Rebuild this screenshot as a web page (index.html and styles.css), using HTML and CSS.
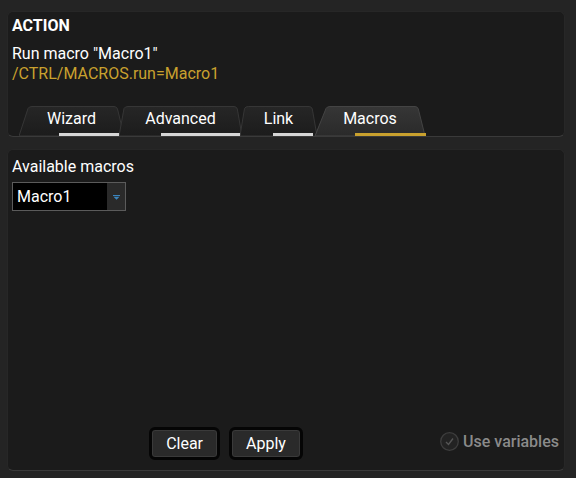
FILE: index.html
```html
<!DOCTYPE html>
<html>
<head>
<meta charset="utf-8">
<link rel="stylesheet" href="styles.css">
</head>
<body>
<div class="page">
  <section class="panel panel-action">
    <div class="title">ACTION</div>
    <div class="desc">Run macro "Macro1"</div>
    <div class="path">/CTRL/MACROS.run=Macro1</div>
    <nav class="tabs">
      <div class="tab tab-wizard">
        <svg class="tab-bg" width="105" height="30" viewBox="0 0 105 30"><defs><linearGradient id="gi" x1="0" y1="0" x2="0" y2="1"><stop offset="0" stop-color="#262626"/><stop offset="1" stop-color="#1c1c1c"/></linearGradient><linearGradient id="ga" x1="0" y1="0" x2="0" y2="1"><stop offset="0" stop-color="#363636"/><stop offset="1" stop-color="#2a2a2a"/></linearGradient></defs><path d="M0 30 L9 2.5 Q10 0.5 13 0.5 L95 0.5 Q97.5 0.5 98.5 3 L105 30 Z" fill="url(#gi)" stroke="#363636" stroke-width="1"/></svg>
        <span class="tab-label">Wizard</span><span class="tab-line"></span>
      </div>
      <div class="tab tab-advanced">
        <svg class="tab-bg" width="123" height="30" viewBox="0 0 123 30"><path d="M0 30 L5 2.5 Q6 0.5 9 0.5 L115 0.5 Q117.5 0.5 118.3 3 L123 30 Z" fill="url(#gi)" stroke="#363636" stroke-width="1"/></svg>
        <span class="tab-label">Advanced</span><span class="tab-line"></span>
      </div>
      <div class="tab tab-link">
        <svg class="tab-bg" width="77" height="30" viewBox="0 0 77 30"><path d="M0 30 L4.5 2.5 Q5.5 0.5 8.5 0.5 L69 0.5 Q71.5 0.5 72.3 3 L77 30 Z" fill="url(#gi)" stroke="#363636" stroke-width="1"/></svg>
        <span class="tab-label">Link</span><span class="tab-line"></span>
      </div>
      <div class="tab tab-macros active">
        <svg class="tab-bg" width="110" height="30" viewBox="0 0 110 30"><path d="M0 30 L11 2.5 Q12 0.5 15 0.5 L100 0.5 Q102.5 0.5 103.3 3 L110 30 Z" fill="url(#ga)" stroke="#444" stroke-width="1"/></svg>
        <span class="tab-label">Macros</span><span class="tab-line"></span>
      </div>
    </nav>
  </section>

  <section class="panel panel-macros">
    <div class="field-label">Available macros</div>
    <div class="select">
      <span class="select-value">Macro1</span>
      <span class="select-arrow"><svg width="7" height="5" viewBox="0 0 7 5"><rect x="0" y="0" width="7" height="1" fill="#3a84bd"/><path d="M0.5 1.8 L6.5 1.8 L3.5 4.8 Z" fill="#3a84bd"/></svg></span>
    </div>
    <div class="footer">
      <div class="buttons">
        <button class="btn">Clear</button>
        <button class="btn">Apply</button>
      </div>
      <label class="usevars">
        <span class="check"><svg width="19" height="19" viewBox="0 0 19 19"><circle cx="9.5" cy="9.5" r="8.8" fill="#232323" stroke="#3e3e3e" stroke-width="1.3"/><path d="M6 10 L8.5 12.5 L13 6.5" fill="none" stroke="#555" stroke-width="1.4"/></svg></span>
        <span class="usevars-text">Use variables</span>
      </label>
    </div>
  </section>
</div>
</body>
</html>
```

FILE: styles.css
```css
html, body {
  margin: 0;
  padding: 0;
  background: #242424;
  font-family: Roboto, "Liberation Sans", sans-serif;
  color: #fff;
}

.page {
  width: 576px;
  height: 478px;
  box-sizing: border-box;
  padding: 11px 11px 0 7px;
  display: flex;
  flex-direction: column;
  gap: 12px;
}

.panel {
  background: #1b1b1b;
  border: 1px solid #272727;
  border-bottom-color: #3a3a3a;
  border-radius: 6px;
  box-sizing: border-box;
}

.panel-action {
  height: 126px;
  padding: 4px 4px 0 4px;
  display: flex;
  flex-direction: column;
}

.title {
  font-size: 16px;
  font-weight: 700;
  line-height: 20px;
}

.desc {
  margin-top: 8px;
  font-size: 16px;
  line-height: 20px;
}

.path {
  font-size: 16px;
  line-height: 20px;
  color: #c9a12e;
}

.tabs {
  margin-top: auto;
  display: flex;
  align-items: flex-end;
  padding-left: 7px;
}

.tab {
  position: relative;
  height: 30px;
  display: flex;
  justify-content: center;
  align-items: flex-start;
  flex: none;
}

.tab-bg {
  position: absolute;
  left: 0;
  top: 0;
}

.tab-wizard { width: 105px; }
.tab-advanced { width: 123px; margin-left: -5px; }
.tab-link { width: 77px; margin-left: -2px; }
.tab-macros { width: 110px; margin-left: -2px; }

.tab-label {
  position: relative;
  font-size: 16px;
  line-height: 20px;
  padding-top: 3px;
}

.tab-line {
  position: absolute;
  bottom: 0;
  left: 40px;
  right: -2px;
  height: 3px;
  background: #d6d6d6;
}

.tab-advanced .tab-line { left: 42px; right: -4px; }
.tab-link .tab-line { left: 33px; right: 4px; }
.tab-macros .tab-line { left: 40px; right: -1px; background: #c9a12e; }

.panel-macros {
  flex: 1;
  margin-bottom: 7px;
  padding: 7px 4px 10px 4px;
  display: flex;
  flex-direction: column;
}

.field-label {
  font-size: 16px;
  line-height: 20px;
}

.select {
  margin-top: 5px;
  width: 114px;
  height: 29px;
  box-sizing: border-box;
  border: 1px solid #5b5b5b;
  display: flex;
  background: #000;
}

.select-value {
  flex: 1;
  font-size: 16px;
  line-height: 27px;
  padding-left: 4px;
}

.select-arrow {
  width: 18px;
  background: #2a2a2a;
  display: flex;
  align-items: center;
  justify-content: center;
}

.select-arrow svg { display: block; margin-top: 1px; }

.footer {
  margin-top: auto;
  display: flex;
  align-items: center;
}

.buttons {
  flex: 1;
  display: flex;
  justify-content: center;
  gap: 9px;
}

.btn {
  font-family: Roboto, "Liberation Sans", sans-serif;
  font-size: 16px;
  color: #fff;
  height: 33px;
  padding: 0 14px;
  background: #2a2a2a;
  border: 3px solid #050505;
  border-radius: 6px;
  box-shadow: inset 0 0 0 1px #3a3a3a;
  line-height: 25px;
}

.usevars {
  display: flex;
  align-items: center;
  gap: 4px;
  padding-right: 1px;
  margin-top: -4px;
}

.check svg { display: block; }

.usevars-text {
  font-size: 16px;
  font-weight: 500;
  line-height: 20px;
  color: #8a8a8a;
}
```
